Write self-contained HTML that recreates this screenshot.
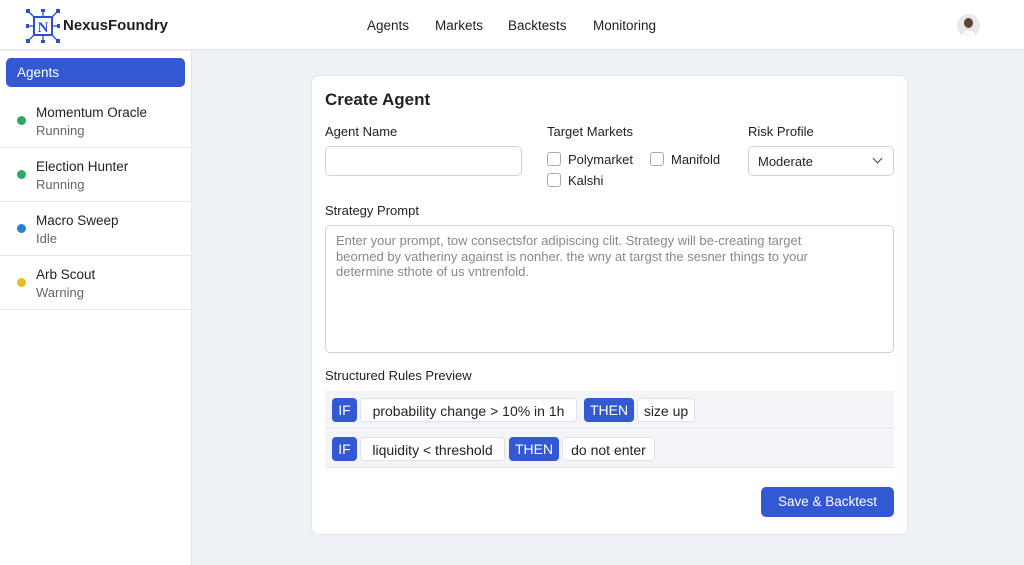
<!DOCTYPE html>
<html><head><style>
*{box-sizing:border-box;margin:0;padding:0}
body{width:1024px;height:565px;overflow:hidden;font-family:"Liberation Sans",sans-serif;background:#eef1f5;color:#1f2328;position:relative}
.top{position:absolute;left:0;top:0;width:1024px;height:50px;background:#fff;border-bottom:1px solid #e2e5ea}
.logo{position:absolute;left:26px;top:9px}
.brand{position:absolute;left:63px;top:17px;font-size:15px;font-weight:600;color:#1c1f24}
.nav{position:absolute;top:18px;font-size:13.5px;color:#222}
.av{position:absolute;left:957px;top:14px;width:23px;height:23px;border-radius:50%;background:#e8e8e8;overflow:hidden}
.side{position:absolute;left:0;top:51px;width:192px;height:514px;background:#fff;border-right:1px solid #e2e5ea}
.act{position:absolute;left:6px;top:7px;width:179px;height:29px;background:#3358d4;border-radius:5px;color:#fff;font-size:13.5px;padding:7px 11px}
.it{position:absolute;left:0;width:191px;height:54px;border-bottom:1px solid #e3e6ea}
.it .d{position:absolute;left:17px;top:22px;width:9px;height:9px;border-radius:50%}
.it .n{position:absolute;left:36px;top:11px;font-size:13.5px;color:#222}
.it .s{position:absolute;left:36px;top:29px;font-size:13px;color:#666}
.card{position:absolute;left:311px;top:75px;width:597px;height:460px;background:#fff;border:1px solid #e2e5ea;border-radius:8px}
.a{position:absolute}
.lbl{font-size:13px;color:#222}
.inp{border:1px solid #cfd3d9;border-radius:5px;background:#fff}
.cb{width:14px;height:14px;border:1px solid #aaa;border-radius:3px;background:#fff}
.row{position:absolute;left:325px;width:569px;height:38px;background:#f2f4f7;border-bottom:1px solid #e3e6ea}
.tag{position:absolute;top:7px;height:24px;font-size:14px;padding:4px 0;border-radius:4px;text-align:center;white-space:nowrap}
.b{background:#3358d4;color:#fff}
.w{background:#fff;border:1px solid #dfe2e6;color:#222}
</style></head><body>
<div class="top">
<svg class="logo" width="34" height="34" viewBox="0 0 34 34" fill="#2f4fd0" stroke="#2f4fd0">
<rect x="8" y="8" width="18" height="18" fill="none" stroke-width="2"/>
<text x="17" y="23" text-anchor="middle" font-size="15" font-weight="bold" stroke="none" font-family="Liberation Serif">N</text>
<g stroke-width="1.3"><line x1="8" y1="8" x2="2" y2="2"/><line x1="26" y1="8" x2="32" y2="2"/><line x1="8" y1="26" x2="2" y2="32"/><line x1="26" y1="26" x2="32" y2="32"/><line x1="17" y1="8" x2="17" y2="1"/><line x1="17" y1="26" x2="17" y2="33"/><line x1="8" y1="17" x2="1" y2="17"/><line x1="26" y1="17" x2="33" y2="17"/></g>
<g stroke="none"><rect x="0" y="0" width="4" height="4"/><rect x="30" y="0" width="4" height="4"/><rect x="0" y="30" width="4" height="4"/><rect x="30" y="30" width="4" height="4"/><rect x="15" y="0" width="4" height="3"/><rect x="15" y="31" width="4" height="3"/><rect x="0" y="15" width="3" height="4"/><rect x="31" y="15" width="3" height="4"/></g>
</svg>
<div class="brand">NexusFoundry</div>
<div class="nav" style="left:367px">Agents</div>
<div class="nav" style="left:435px">Markets</div>
<div class="nav" style="left:508px">Backtests</div>
<div class="nav" style="left:593px">Monitoring</div>
<div class="av"><div style="position:absolute;left:7px;top:4px;width:9px;height:10px;border-radius:50%;background:#5a4236"></div><div style="position:absolute;left:4px;top:15px;width:15px;height:10px;border-radius:6px 6px 0 0;background:#fafafa;border:1px solid #ddd"></div></div>
</div>
<div class="side">
<div class="act">Agents</div>
<div class="it" style="top:43px"><div class="d" style="background:#2fa866"></div><div class="n">Momentum Oracle</div><div class="s">Running</div></div>
<div class="it" style="top:97px"><div class="d" style="background:#2fa866"></div><div class="n">Election Hunter</div><div class="s">Running</div></div>
<div class="it" style="top:151px"><div class="d" style="background:#2a7fd4"></div><div class="n">Macro Sweep</div><div class="s">Idle</div></div>
<div class="it" style="top:205px"><div class="d" style="background:#e8bb1e"></div><div class="n">Arb Scout</div><div class="s">Warning</div></div>
</div>
<div class="card"></div>
<div class="a" style="left:325px;top:90px;font-size:17px;font-weight:600">Create Agent</div>
<div class="a lbl" style="left:325px;top:124px">Agent Name</div>
<div class="a inp" style="left:325px;top:146px;width:197px;height:30px"></div>
<div class="a lbl" style="left:547px;top:124px">Target Markets</div>
<div class="a cb" style="left:547px;top:152px"></div><div class="a lbl" style="left:568px;top:152px">Polymarket</div>
<div class="a cb" style="left:650px;top:152px"></div><div class="a lbl" style="left:671px;top:152px">Manifold</div>
<div class="a cb" style="left:547px;top:173px"></div><div class="a lbl" style="left:568px;top:173px">Kalshi</div>
<div class="a lbl" style="left:748px;top:124px">Risk Profile</div>
<div class="a inp" style="left:748px;top:146px;width:146px;height:30px;font-size:13px;padding:7px 9px">Moderate<span style="position:absolute;right:12px;top:8px;width:7px;height:7px;border-right:1.3px solid #444;border-bottom:1.3px solid #444;transform:rotate(45deg)"></span></div>
<div class="a lbl" style="left:325px;top:203px">Strategy Prompt</div>
<div class="a inp" style="left:325px;top:225px;width:569px;height:128px;padding:7px 60px 7px 10px;font-size:13px;color:#888;line-height:15.5px">Enter your prompt, tow consectsfor adipiscing clit. Strategy will be-creating target beorned by vatheriny against is nonher. the wny at targst the sesner things to your determine sthote of us vntrenfold.</div>
<div class="a lbl" style="left:325px;top:368px">Structured Rules Preview</div>
<div class="row" style="top:391px"><div class="tag b" style="left:7px;width:25px">IF</div><div class="tag w" style="left:35px;width:217px">probability change &gt; 10% in 1h</div><div class="tag b" style="left:259px;width:50px">THEN</div><div class="tag w" style="left:312px;width:58px">size up</div></div>
<div class="row" style="top:430px"><div class="tag b" style="left:7px;width:25px">IF</div><div class="tag w" style="left:35px;width:145px">liquidity &lt; threshold</div><div class="tag b" style="left:184px;width:50px">THEN</div><div class="tag w" style="left:237px;width:93px">do not enter</div></div>
<div class="a" style="left:761px;top:487px;width:133px;height:30px;background:#3358d4;border-radius:5px;color:#fff;font-size:13.5px;text-align:center;padding-top:7px">Save &amp; Backtest</div>
</body></html>
